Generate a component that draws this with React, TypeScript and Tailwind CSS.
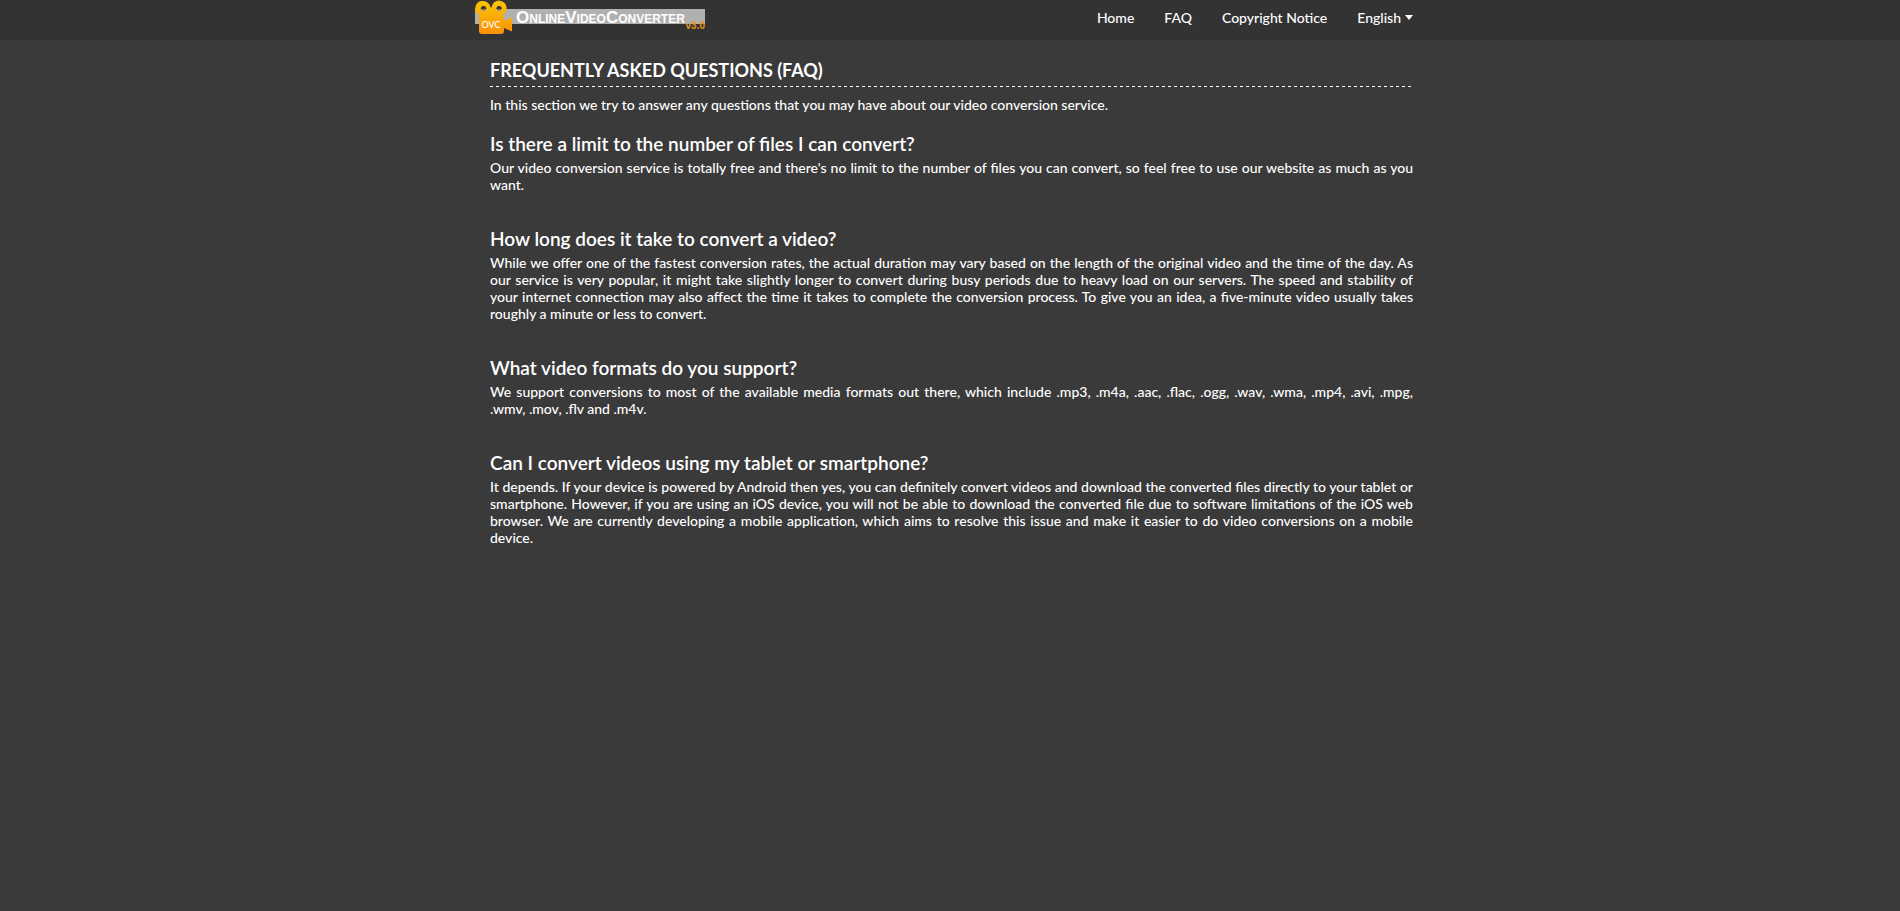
const NAV_LINKS = ["Home", "FAQ", "Copyright Notice"];

const FAQ_ITEMS = [
  {
    question: "Is there a limit to the number of files I can convert?",
    answer:
      "Our video conversion service is totally free and there's no limit to the number of files you can convert, so feel free to use our website as much as you want.",
  },
  {
    question: "How long does it take to convert a video?",
    answer:
      "While we offer one of the fastest conversion rates, the actual duration may vary based on the length of the original video and the time of the day. As our service is very popular, it might take slightly longer to convert during busy periods due to heavy load on our servers. The speed and stability of your internet connection may also affect the time it takes to complete the conversion process. To give you an idea, a five-minute video usually takes roughly a minute or less to convert.",
  },
  {
    question: "What video formats do you support?",
    answer:
      "We support conversions to most of the available media formats out there, which include .mp3, .m4a, .aac, .flac, .ogg, .wav, .wma, .mp4, .avi, .mpg, .wmv, .mov, .flv and .m4v.",
  },
  {
    question: "Can I convert videos using my tablet or smartphone?",
    answer:
      "It depends. If your device is powered by Android then yes, you can definitely convert videos and download the converted files directly to your tablet or smartphone. However, if you are using an iOS device, you will not be able to download the converted file due to software limitations of the iOS web browser. We are currently developing a mobile application, which aims to resolve this issue and make it easier to do video conversions on a mobile device.",
  },
];

function CameraLogo() {
  return (
    <svg width="37" height="34" viewBox="0 0 37 34" className="absolute left-0 top-0" aria-hidden="true">
      <defs>
        <linearGradient id="camera" x1="0" y1="0" x2="0" y2="1">
          <stop offset="0" stopColor="#fdc500" />
          <stop offset="1" stopColor="#f98f0a" />
        </linearGradient>
      </defs>
      <path
        fill="url(#camera)"
        fillRule="evenodd"
        d="M8 1a7.500 7.500 0 0 1 7.500 6.500h1A7.600 7.600 0 1 1 27.500 15q1.500.6 1.500 3v3L37 17.500v14L29 28v3q0 3-3 3H7q-3 0-3-3V15A7.500 7.500 0 0 1 8 1ZM8.500 6a2.800 2.800 0 1 0 .1 0ZM24 6a2.800 2.800 0 1 0 .1 0Z"
      />
      <path d="M7.200 9.400h2.600M22.700 9.400h2.600" stroke="#8a6a10" strokeWidth="1.500" strokeLinecap="round" />
      <text x="16" y="28" textAnchor="middle" fill="#fff" fontSize="9" fontWeight="500" fontFamily="Lato, sans-serif">
        OVC
      </text>
    </svg>
  );
}

function Brand() {
  return (
    <a href="#" className="relative flex h-[34px] w-[230px] items-start pt-[9px]" aria-label="OnlineVideoConverter v3.0">
      <span className="flex h-[15px] w-full items-center bg-[#b0b0b0] pl-[41px] pt-[2px] font-['Liberation_Sans',Arial,sans-serif] text-[17px] font-bold leading-none [font-variant-caps:small-caps]">
        OnlineVideoConverter
      </span>
      <CameraLogo />
      <span className="absolute right-0 top-[21px] font-['Liberation_Sans',Arial,sans-serif] text-[10px] font-bold leading-[10px] text-[#e8901c]">
        v3.0
      </span>
    </a>
  );
}

export default function App() {
  return (
    <div className="min-h-screen bg-[#3a3a3a] font-['Lato',sans-serif] text-[14px] font-medium leading-[17px] text-white">
      <header className="bg-[#333333]">
        <div className="mx-auto flex h-10 max-w-[950px] items-start justify-between pr-3">
          <Brand />
          <nav className="flex gap-[30px] pt-[9px]">
            {NAV_LINKS.map((label) => (
              <a key={label} href="#">
                {label}
              </a>
            ))}
            <button type="button" className="flex items-center gap-1">
              English
              <svg width="8" height="5" viewBox="0 0 8 5" fill="currentColor" aria-hidden="true">
                <path d="M0 0h8L4 5Z" />
              </svg>
            </button>
          </nav>
        </div>
      </header>
      <main className="mx-auto max-w-[950px] pb-8 pl-[15px] pr-3 pt-[19px]">
        <h1 className="text-[18px] font-bold leading-[22px]">FREQUENTLY ASKED QUESTIONS (FAQ)</h1>
        <div className="mb-[9px] mt-[5px] h-px bg-[repeating-linear-gradient(90deg,#fff_0_3px,transparent_3px_6px)]" />
        <p className="mb-5">
          In this section we try to answer any questions that you may have about our video conversion service.
        </p>
        {FAQ_ITEMS.map(({ question, answer }) => (
          <section key={question} className="mb-[35px]">
            <h2 className="mb-1 text-[19px] font-semibold leading-[22px]">{question}</h2>
            <p className="text-justify">{answer}</p>
          </section>
        ))}
      </main>
    </div>
  );
}
